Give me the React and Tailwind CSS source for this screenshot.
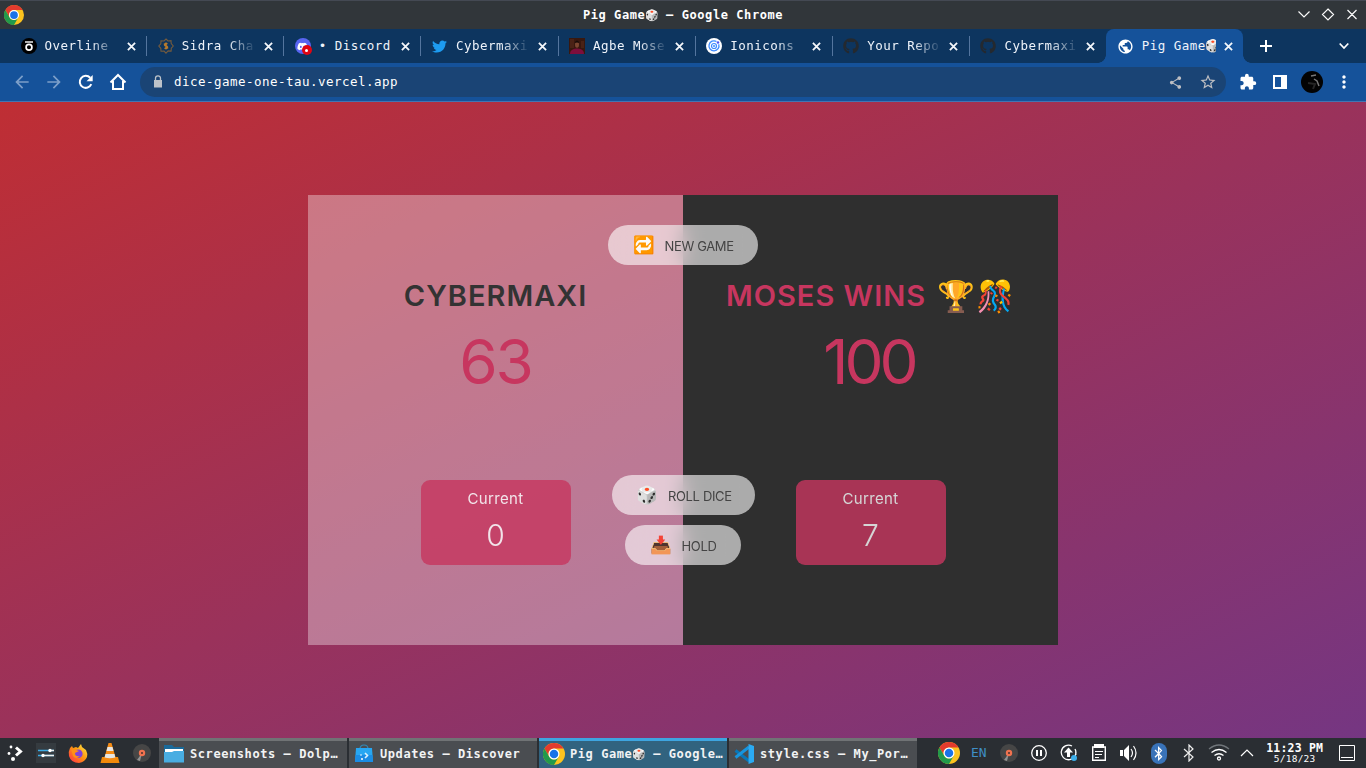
import React from "react";
import { FaTwitter, FaGithub, FaDiscord, FaBluetoothB } from "react-icons/fa";
import { MdArrowBack, MdArrowForward, MdShare, MdStarOutline, MdExtension, MdMoreVert, MdPublic } from "react-icons/md";

const mono = "font-['DejaVu_Sans_Mono','Noto_Color_Emoji',monospace]";

function X({ size = 9, width = 2 }) {
  return (
    <svg width={size} height={size} viewBox="0 0 10 10" fill="none" stroke="#f4f7fb" strokeWidth={width}>
      <path d="M1 1l8 8M9 1L1 9" />
    </svg>
  );
}

function Chrome({ size }) {
  return (
    <svg width={size} height={size} viewBox="0 0 48 48" className="shrink-0">
      <circle cx="24" cy="24" r="24" fill="#fcc31e" />
      <path d="M3.2 12A24 24 0 0 1 44.8 12H24A12 12 0 0 0 13.6 30Z" fill="#e33b2e" />
      <path d="M3.2 12A24 24 0 0 0 24 48L34.4 30A12 12 0 0 1 13.6 30Z" fill="#229a4b" />
      <circle cx="24" cy="24" r="12" fill="#fff" />
      <circle cx="24" cy="24" r="9.3" fill="#1a73e8" />
    </svg>
  );
}

function Overline() {
  return (
    <svg width="16" height="16" viewBox="0 0 16 16">
      <circle cx="8" cy="8" r="8" fill="#000" />
      <path d="M4 4h8" stroke="#fff" strokeWidth="1.4" />
      <circle cx="8" cy="9.3" r="2.9" fill="none" stroke="#fff" strokeWidth="1.7" />
    </svg>
  );
}

function Sidra() {
  return (
    <svg width="16" height="16" viewBox="0 0 16 16" fill="none">
      <path d="M8 1l2 2 3-.3.2 2.9L15.3 8l-2 2.2-.2 2.9-3-.2-2.1 2.2-2-2.1-3 .2-.2-2.9L.8 8l2-2.2L3 2.8l3 .2z" stroke="#755b3d" strokeWidth="1.1" />
      <path d="M8 4.500v7M9.500 6q-1.500-1-3 0 0 2 1.500 2t1.500 2q-1.500 1-3 0" stroke="#b77a2c" strokeWidth="1.5" />
    </svg>
  );
}

function Discord() {
  return (
    <span className="relative flex size-4 items-center justify-center rounded-full bg-[#5865f2] text-white">
      <FaDiscord size={11} />
      <span className="absolute -right-px -bottom-px flex size-2.5 items-center justify-center rounded-full bg-[#e00613]">
        <span className="size-[3px] rounded-full bg-white" />
      </span>
    </span>
  );
}

function Portrait() {
  return (
    <svg width="16" height="16" viewBox="0 0 16 16">
      <path fill="#38180f" d="M0 0h16v16H0z" />
      <path fill="#4a2216" d="M1 1h4v9H1zM12 3h3v7h-3z" />
      <path fill="#7d0e3c" d="M1 16c0-4 3-5 6-5.500 4 0 8 1 8 5.500z" />
      <ellipse cx="8" cy="6.5" rx="2" ry="3.200" fill="#7b4630" />
      <path d="M5.800 5q.2-2.500 2.200-2.500T10.200 5Q8 4 5.800 5" fill="#180b08" />
    </svg>
  );
}

function Ionicon() {
  return (
    <svg width="16" height="16" viewBox="0 0 16 16" fill="none" stroke="#3d8bff">
      <circle cx="8" cy="8" r="8" fill="#fff" stroke="none" />
      <path d="M10.500 3.500a5 5 0 1 0 2.200 2.700" strokeWidth="1.300" />
      <circle cx="8" cy="8" r="2.500" strokeWidth="1.200" />
      <circle cx="8" cy="8" r="1" fill="#3d8bff" stroke="none" />
      <circle cx="12" cy="4.500" r="1.200" fill="#4a50f5" stroke="none" />
    </svg>
  );
}

const tabs = [
  { icon: <Overline />, title: "Overline" },
  { icon: <Sidra />, title: "Sidra Cha" },
  { icon: <Discord />, title: "• Discord", full: true },
  { icon: <FaTwitter size={15} color="#1d9bf0" />, title: "Cybermaxi" },
  { icon: <Portrait />, title: "Agbe Mose" },
  { icon: <Ionicon />, title: "Ionicons" },
  { icon: <FaGithub size={16} color="#24292f" />, title: "Your Repo" },
  { icon: <FaGithub size={16} color="#24292f" />, title: "Cybermaxi" },
  { icon: <MdPublic size={17} color="#fff" />, title: "Pig Game🎲", active: true, full: true },
];

function Tab({ tab, index }) {
  const { icon, title, active, full } = tab;
  return (
    <div className={"relative flex h-[34px] w-[137.150px] shrink-0 items-center pl-[11px] " + (active ? "rounded-t-[8px] bg-[#15529a]" : "")}>
      {active && (
        <>
          <span className="absolute bottom-0 -left-2 size-2 bg-[radial-gradient(circle_at_0_0,transparent_7.500px,#15529a_8px)]" />
          <span className="absolute -right-2 bottom-0 size-2 bg-[radial-gradient(circle_at_100%_0,transparent_7.500px,#15529a_8px)]" />
        </>
      )}
      <span className="flex w-[17px] shrink-0 justify-center">{icon}</span>
      <span className={"ml-[7.500px] w-[74.500px] shrink-0 overflow-hidden text-[12.500px] leading-[20px] tracking-[0.475px] whitespace-pre text-[#eef3fa] " + (full ? "" : "[mask-image:linear-gradient(to_right,#000_62%,transparent)]")}>{title}</span>
      <span className="ml-[7px] flex w-[10px] justify-center"><X /></span>
      {index < 7 && <span className="-mr-px ml-auto h-5 w-px bg-[#54759e]" />}
    </div>
  );
}

function TitleBar() {
  return (
    <div className="grid h-[29px] shrink-0 grid-cols-[1fr_auto_1fr] items-center border-t border-[#444953] bg-[#31363a] text-white">
      <span className="pl-1"><Chrome size={20} /></span>
      <span className="text-[12px] leading-5 font-bold tracking-[0.576px] whitespace-pre">Pig Game<span className="inline-block w-[13px] text-[11px] font-normal tracking-normal">🎲</span> – Google Chrome</span>
      <svg width="70" height="20" viewBox="0 0 70 20" className="justify-self-end" fill="none" stroke="#fafafa" strokeWidth="1.200">
        <path d="M2.500 6.500l5.500 5.500 5.500-5.500M32 4l5.500 5.500-5.500 5.500-5.500-5.500zM51.500 5l9 9M60.500 5l-9 9" />
      </svg>
    </div>
  );
}

function Toolbar() {
  return (
    <div className="flex h-[39px] shrink-0 items-center border-b border-[#4175b3] bg-[#15529a] text-white">
      <div className="flex w-[140px] shrink-0 gap-3 pl-3">
        <MdArrowBack size={20} color="#7c9fc9" />
        <MdArrowForward size={20} color="#7c9fc9" />
        <svg width="20" height="20" viewBox="0 0 20 20" fill="none"><path d="M15.300 12.200A6 6 0 1 1 14.200 5.800" stroke="#fff" strokeWidth="2" /><path d="M16.700 3v6.200h-6.200z" fill="#fff" /></svg>
        <svg width="20" height="20" viewBox="0 0 20 20" fill="none" stroke="#fff" strokeWidth="2"><path d="M2.500 10.500L10 3l7.500 7.500M5 9v8h10V9" /></svg>
      </div>
      <div className="flex h-[30px] w-[1086px] items-center rounded-full bg-[#1a4475] pr-[9px] pl-2.5">
        <svg width="16" height="14" viewBox="0 0 16 14"><path d="M4 5h8v7.500H4z" fill="#bcc2c9" /><path d="M5.500 5.500V3.300a2.500 2.500 0 0 1 5 0v2.200" fill="none" stroke="#bcc2c9" strokeWidth="1.300" /></svg>
        <span className="ml-[8px] text-[12.500px] leading-5 tracking-[0.475px]">dice-game-one-tau.vercel.app</span>
        <span className="ml-auto flex items-center gap-4 text-[#bebfc3]"><MdShare size={15} /><MdStarOutline size={18} /></span>
      </div>
      <div className="flex flex-1 items-center pl-[13px]">
        <MdExtension size={18} />
        <svg width="14" height="14" viewBox="0 0 14 14" className="ml-[16px]"><path fill="#fff" fillRule="evenodd" d="M0 0h14v14H0zM2 2v10h6V2z" /></svg>
        <svg width="22" height="22" viewBox="0 0 22 22" className="ml-[14px]">
          <circle cx="11" cy="11" r="11" fill="#030303" />
          <path d="M10 5l5-1M13 8l3 2 2 5" stroke="#777" strokeWidth="1.500" fill="none" /><path d="M7 12l7 1-2 5" stroke="#262626" strokeWidth="2" fill="none" />
        </svg>
        <MdMoreVert size={20} className="ml-[11px]" />
      </div>
    </div>
  );
}

function GameButton({ emoji, label, className }) {
  return (
    <button className={"flex h-10 items-center rounded-full bg-white/60 pl-[25px] text-[13px] tracking-[-0.350px] text-[#444] backdrop-blur-[10px] " + className}>
      <span className="w-[31.500px] shrink-0 text-left text-[17.500px] leading-none">{emoji}</span>
      <span className="pt-[3px] whitespace-nowrap">{label}</span>
    </button>
  );
}

function Player({ name, emoji, score, current, winner }) {
  return (
    <section className={"flex w-[375px] flex-col items-center " + (winner ? "bg-[#2f2f2f]" : "bg-white/35")}>
      <h2 className={"mt-[80px] flex h-[42px] items-center text-[29px] font-semibold tracking-[1px] whitespace-pre " + (winner ? "text-[#c7365f]" : "text-[#333]")}>
        {name}
        {emoji && <span className="ml-[11px] text-[30.500px]">{emoji}</span>}
      </h2>
      <p className={"mt-[13px] h-[64px] text-[62px] leading-[64px] font-normal text-[#c7365f] " + (winner ? "mr-[3px] tracking-[-4px]" : "tracking-[-2px]")}>{score}</p>
      <div className="mt-[86px] flex h-[85px] w-[150px] flex-col items-center rounded-[9px] bg-[#c7365f] text-white opacity-80">
        <span className="mt-[8px] text-[15px] leading-[22px] tracking-[0.350px]">Current</span>
        <span className="mt-[8px] text-[30px] leading-[34px] font-light">{current}</span>
      </div>
    </section>
  );
}

function Game() {
  return (
    <main className="flex h-[636px] shrink-0 justify-center bg-[linear-gradient(to_top_left,#753682_0%,#bf2e34_100%)] pt-[93px] font-['Inter','Noto_Color_Emoji',sans-serif]">
      <div className="relative flex h-[450px] w-[750px]">
        <Player name="CYBERMAXI" score="63" current="0" />
        <Player name="MOSES WINS" emoji="🏆🎊" score="100" current="7" winner />
        <GameButton emoji="🔁" label="NEW GAME" className="absolute top-[30px] left-[300px] w-[150px]" />
        <GameButton emoji="🎲" label="ROLL DICE" className="absolute top-[280px] left-[303.500px] w-[143.500px]" />
        <GameButton emoji="📥" label="HOLD" className="absolute top-[330px] left-[317px] w-[116px]" />
      </div>
    </main>
  );
}

function Disc() {
  return (
    <svg width="18" height="18" viewBox="0 0 18 18">
      <circle cx="9" cy="9" r="9" fill="#464646" /><path d="M9 9L4 16l3 1z" fill="#929292" />
      <circle cx="9" cy="9" r="3.200" fill="#f1724f" /><circle cx="9" cy="9" r="1" fill="#4a332e" />
    </svg>
  );
}

function Launchers() {
  return (
    <div className="flex w-[159px] shrink-0 items-center pl-[6px]">
      <svg width="18" height="18" viewBox="0 0 18 18" fill="#fff"><circle cx="3" cy="9.500" r="1.400" /><circle cx="5" cy="3" r="1.400" /><circle cx="7" cy="15" r="2" /><path d="M10 3.500l4.500 4-4.500 4" fill="none" stroke="#fff" strokeWidth="3" /></svg>
      <svg width="20" height="20" viewBox="0 0 20 20" className="ml-[12px]">
        <path fill="#353b40" d="M0 0h20v20H0z" /><path d="M2 7.500h16M2 12.500h16" stroke="#3dace5" strokeWidth="1.600" /><path d="M14 7.500h4M7 12.500h11" stroke="#eee" strokeWidth="1.600" /><circle cx="14" cy="7.500" r="1.700" fill="#fff" /><circle cx="7" cy="12.500" r="1.700" fill="#fff" />
      </svg>
      <svg width="20" height="20" viewBox="0 0 20 20" className="ml-[12px]">
        <defs><linearGradient id="fire" x1="1" x2="0" y1="0" y2="1"><stop stopColor="#fff44f" /><stop offset=".45" stopColor="#ff980e" /><stop offset="1" stopColor="#ff264f" /></linearGradient></defs>
        <path d="M2 5l2-2 1 2 3-1 2 1 3-4 1 3 4 3q2 4 1 7-2 5-8 6-8 0-10-7Q0 9 2 5" fill="url(#fire)" />
        <circle cx="10.300" cy="10.700" r="4.300" fill="#8142d8" /><path d="M3 6q3-1 5 1l3 1-4 2q0 4 5 3-4 4-7 0z" fill="#ff9016" />
      </svg>
      <svg width="20" height="22" viewBox="0 0 20 22" className="ml-[12px]">
        <path d="M2 15h16l1.500 6H.5z" fill="#f28a0a" /><path d="M8.500 1h3l4.500 16q-6 3-12 0z" fill="#f58b13" /><path d="M7.500 5h5l1 4h-7zM5.500 12h9l.8 3.500q-5.500 1.500-10.700 0z" fill="#e7e6e3" />
      </svg>
      <span className="ml-[13px]"><Disc /></span>
    </div>
  );
}

function Folder() {
  return <svg width="20" height="18" viewBox="0 0 20 18"><path d="M0 0h8l2 2h10v15H0z" fill="#1a6a9a" /><path d="M1 4h18v4H1z" fill="#fff" /><path d="M0 7h8l2-1h10v11.500H0z" fill="#48ade2" /></svg>;
}
function Bag() {
  return <svg width="18" height="20" viewBox="0 0 18 20"><path d="M5 5q0-4 4-4t4 4" fill="none" stroke="#3288b6" strokeWidth="1.200" /><path d="M1 4h16l1 14H0z" fill="#27a7f2" /><path d="M.5 11h17l.5 7H0z" fill="#1a8ce4" /><path d="M10 9l2.500 2.500L10 14" fill="none" stroke="#d9f2ff" strokeWidth="1.600" /><circle cx="6" cy="11" r=".8" fill="#fff" /><circle cx="7" cy="15" r="1" fill="#fff" /></svg>;
}
function Code() {
  return <svg width="20" height="20" viewBox="0 0 20 20"><path d="M1.500 6.500L15 17" stroke="#0877b9" strokeWidth="3" /><path d="M1.500 13.500L15 3" stroke="#1795df" strokeWidth="3" /><path d="M14.500 0L20 2v16l-5.500 2z" fill="#2baaf2" /></svg>;
}

function Task({ icon, children, active }) {
  return (
    <div className={"flex h-[30px] w-[188px] shrink-0 items-center overflow-hidden border-t-[3px] pb-px pl-[5px] " + (active ? "border-[#3ea5e0] bg-[#31637f]" : "border-[#707375] bg-[#4a4d51]")}>
      <span className="flex w-[20px] shrink-0 justify-center">{icon}</span>
      <span className="ml-[6px] text-[12px] leading-5 font-bold tracking-[0.576px] whitespace-pre text-[#f2f3f4]">{children}</span>
    </div>
  );
}

function Tray() {
  return (
    <div className="flex flex-1 items-center pl-[21px] text-white">
      <Chrome size={22} />
      <span className="ml-[11px] text-[13px] leading-5 text-[#3f8fc6]">EN</span>
      <span className="ml-[13px]"><Disc /></span>
      <svg width="16" height="16" viewBox="0 0 16 16" className="ml-[13px]" fill="none" stroke="#fff"><circle cx="8" cy="8" r="7.300" strokeWidth="1.300" /><path d="M6 5v6M10 5v6" strokeWidth="2" /></svg>
      <svg width="18" height="18" viewBox="0 0 18 18" className="ml-[13px]" fill="none" stroke="#fff"><path d="M12 2a7.300 7.300 0 1 0 3 3M15.800 8v3" strokeWidth="1.300" /><path d="M8.500 13V7" strokeWidth="3" /><path d="M8.500 3.500L13 8.500H4z" fill="#fff" stroke="none" /><circle cx="14" cy="14" r="3" fill="#3daee9" stroke="none" /></svg>
      <svg width="16" height="18" viewBox="0 0 16 18" className="ml-[13px]" fill="none" stroke="#fff"><path d="M1.700 3v13.300h12.600V3z" strokeWidth="1.400" /><path d="M3 0h10v4H3z" fill="#fff" stroke="none" /><path d="M4 7.500h8M4 10.500h7M4 13.500h4" strokeWidth="1.200" /></svg>
      <svg width="18" height="18" viewBox="0 0 18 18" className="ml-[13px]" fill="#fff"><path d="M0 6h3v6H0zM4 6l5-5v16l-5-5z" /><path d="M11 5q3 4 0 8M13.500 2q5 7 0 14" fill="none" stroke="#fff" strokeWidth="1.200" /></svg>
      <span className="ml-[13px] flex h-[21px] w-[16px] items-center justify-center rounded-full bg-[#3973b9]"><FaBluetoothB size={15} /></span>
      <svg width="12" height="18" viewBox="0 0 12 18" className="ml-[16px]" fill="none" stroke="#eee" strokeWidth="1.200"><path d="M1 5l9 8-4 4V1l4 4-9 8" /></svg>
      <svg width="22" height="18" viewBox="0 0 22 18" className="ml-[13px]" fill="none" strokeWidth="1.300"><path d="M1 5q10-8 20 0" stroke="#70757a" /><path d="M3.500 8.500q7.500-6 15 0M6.500 11.500q4.500-3.500 9 0" stroke="#fff" /><circle cx="11" cy="14.500" r="1.500" stroke="#fff" /></svg>
      <svg width="14" height="10" viewBox="0 0 14 10" className="ml-[10px]" fill="none" stroke="#fff" strokeWidth="1.200"><path d="M1 8l6-6 6 6" /></svg>
      <div className="ml-[12px] flex w-[58px] flex-col items-center pb-px">
        <span className="text-[11.500px] leading-[12px] font-bold tracking-[0.200px] whitespace-nowrap">11:23 PM</span>
        <span className="text-[9.500px] leading-[10px] tracking-[0.250px]">5/18/23</span>
      </div>
      <svg width="16" height="16" viewBox="0 0 16 16" className="ml-[15px]" fill="none" stroke="#fff" strokeWidth="1"><path d="M.5.5h15v15H.5zM2 12.500h12" /></svg>
    </div>
  );
}

export default function App() {
  return (
    <div className={"flex h-[768px] w-[1366px] flex-col overflow-hidden " + mono}>
      <TitleBar />
      <div className="flex h-[34px] shrink-0 items-center bg-[#0d355f] pl-[9px]">
        {tabs.map((tab, i) => <Tab key={i} tab={tab} index={i} />)}
        <svg width="12" height="12" viewBox="0 0 12 12" className="ml-[17px]" stroke="#fff" strokeWidth="2"><path d="M6 0v12M0 6h12" /></svg>
        <svg width="10" height="8" viewBox="0 0 10 8" className="mr-[17px] ml-auto" fill="none" stroke="#fff" strokeWidth="1.700"><path d="M.7 1.500L5 6l4.300-4.500" /></svg>
      </div>
      <Toolbar />
      <Game />
      <footer className="flex h-[30px] shrink-0 bg-[#2a2e33]">
        <Launchers />
        <div className="flex w-[758px] gap-[2px]">
          <Task icon={<Folder />}>Screenshots — Dolp…</Task>
          <Task icon={<Bag />}>Updates — Discover</Task>
          <Task icon={<Chrome size={22} />} active>Pig Game<span className="inline-block w-[13px] text-[11px] font-normal tracking-normal">🎲</span> – Google…</Task>
          <Task icon={<Code />}>style.css – My_Por…</Task>
        </div>
        <Tray />
      </footer>
    </div>
  );
}
